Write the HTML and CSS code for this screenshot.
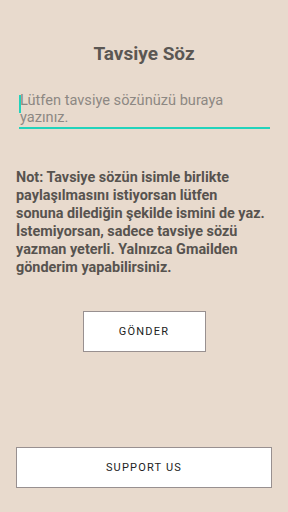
FILE: index.html
```html
<!DOCTYPE html>
<html>
<head>
<meta charset="utf-8">
<link rel="stylesheet" href="styles.css">
</head>
<body>
<div class="screen">
  <h1 class="title">Tavsiye Söz</h1>
  <div class="field">
    <span class="cursor"></span>
    <div class="placeholder">Lütfen tavsiye sözünüzü buraya yazınız.</div>
  </div>
  <p class="note">Not: Tavsiye sözün isimle birlikte<br>paylaşılmasını istiyorsan lütfen<br>sonuna dilediğin şekilde ismini de yaz.<br>İstemiyorsan, sadece tavsiye sözü<br>yazman yeterli. Yalnızca Gmailden<br>gönderim yapabilirsiniz.</p>
  <div class="center">
    <button class="btn send">GÖNDER</button>
  </div>
  <div class="spacer"></div>
  <button class="btn support">SUPPORT US</button>
</div>
</body>
</html>
```
FILE: styles.css
```css
html, body {
  margin: 0;
  padding: 0;
  background: #e8dacd;
}
.screen {
  width: 288px;
  height: 512px;
  box-sizing: border-box;
  padding: 0 16px 24px 16px;
  display: flex;
  flex-direction: column;
  font-family: Roboto, "Noto Sans", sans-serif;
}
.title {
  margin: 42px 0 0 0;
  text-align: center;
  font-size: 19px;
  line-height: 24px;
  font-weight: bold;
  color: #5b5753;
}
.field {
  position: relative;
  margin: 25px 2px 0 3px;
  padding: 1px 0 1px 1px;
  border-bottom: 2px solid #22d3bb;
}
.cursor {
  position: absolute;
  left: 0;
  top: 4px;
  width: 1.5px;
  height: 18px;
  background: #22d3bb;
}
.placeholder {
  font-size: 14.6px;
  line-height: 17px;
  color: #8d8883;
}
.note {
  margin: 40px 0 0 0;
  font-size: 14.4px;
  line-height: 18px;
  font-weight: bold;
  color: #57534f;
  white-space: nowrap;
}
.center {
  display: flex;
  justify-content: center;
  margin-top: 34px;
}
.btn {
  background: #fff;
  border: 1px solid #989090;
  font-family: Roboto, "Noto Sans", sans-serif;
  font-size: 11px;
  letter-spacing: 1.2px;
  color: #222;
  padding: 0;
  box-sizing: border-box;
  height: 41px;
}
.send {
  width: 123px;
}
.spacer {
  flex: 1;
}
.support {
  width: 256px;
}
```
